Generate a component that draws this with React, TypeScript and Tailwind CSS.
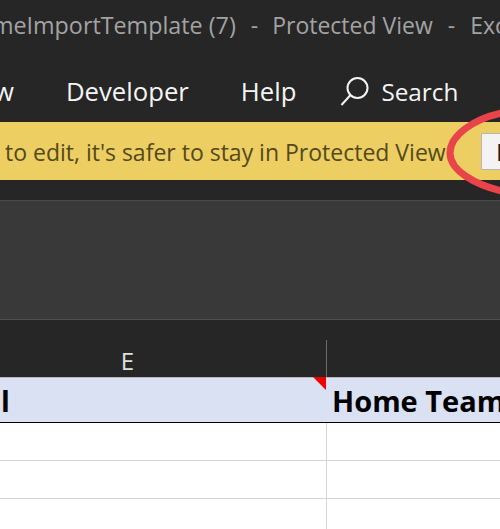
function Row() {
  return (
    <div className="flex h-[38px] shrink-0 border-b border-[#d4d4d4] bg-white">
      <div className="w-[327px] shrink-0 border-r border-[#d4d4d4]" />
      <div className="flex-1" />
    </div>
  );
}

export default function App() {
  return (
    <div className="relative flex h-[529px] w-[500px] flex-col overflow-hidden bg-[#262626] font-['Segoe_UI','Open_Sans','Noto_Sans',sans-serif]">
      <div className="flex h-[54px] shrink-0 items-center overflow-hidden whitespace-nowrap pb-[4px] text-[23px] text-[#a3a3a3]">
        <span className="ml-[-38px] text-[23.3px]">GameImportTemplate (7)</span>
        <span className="ml-[15px]">-</span>
        <span className="ml-[14px]">Protected View</span>
        <span className="ml-[15px]">-</span>
        <span className="ml-[15px]">Excel</span>
      </div>
      <div className="flex h-[68px] shrink-0 items-center whitespace-nowrap pt-[8px] text-[25.7px] text-[#f5f5f5]">
        <span className="ml-[-6px]">w</span>
        <span className="ml-[52px]">Developer</span>
        <span className="ml-[52px]">Help</span>
        <svg className="ml-[44px] mr-[11px]" width="30" height="36" viewBox="0 0 30 36" fill="none" stroke="#f5f5f5" strokeWidth="2">
          <circle cx="17.5" cy="14" r="10" />
          <path d="M10.5 21 L1.5 31" />
        </svg>
        <span className="text-[24.3px]">Search</span>
      </div>
      <div className="flex h-[58px] shrink-0 items-center whitespace-nowrap bg-[#ecce62] pt-[2px] text-[23px] text-[#54491c]">
        <span className="ml-[5px]">to edit, it's safer to stay in Protected View</span>
      </div>
      <div className="h-[20px] shrink-0 bg-[#262626]" />
      <div className="h-[120px] shrink-0 border-t border-b border-t-[#4a4a4a] border-b-[#4f4f4f] bg-[#393939]" />
      <div className="flex h-[57px] shrink-0 items-end">
        <div className="flex h-[37px] w-[327px] shrink-0 items-center justify-end border-r border-[#6a6a6a] pr-[192px] pt-[4px] text-[24px] text-[#e0e0e0]">E</div>
      </div>
      <div className="flex h-[46px] shrink-0 border-y border-t-[#b8b8b8] border-b-black bg-[#d9e1f2] pt-[2px] text-[29px] font-bold text-black">
        <div className="relative flex w-[327px] shrink-0 items-center overflow-hidden">
          <span className="ml-[1px]">l</span>
        </div>
        <div className="flex flex-1 items-center overflow-hidden whitespace-nowrap pl-[5px]">Home Team</div>
      </div>
      <Row />
      <Row />
      <Row />
      <div className="absolute left-[313px] top-[377px] h-0 w-0 border-l-[13px] border-t-[13px] border-l-transparent border-t-[#ee0000]" />
      <div className="absolute left-[481px] top-[133px] flex h-[37px] w-[40px] items-center rounded-[1px] border border-[#b5b5b5] bg-[#f3f3f3] pl-[14px] text-[24px] leading-none text-[#222]">E</div>
      <svg className="absolute left-[440px] top-[105px]" width="60" height="90" viewBox="0 0 60 90" fill="none">
        <path d="M62 8 C34 14 10 30 10 48 C10 66 36 80 62 86" stroke="#e8444a" strokeWidth="7" />
      </svg>
    </div>
  );
}
